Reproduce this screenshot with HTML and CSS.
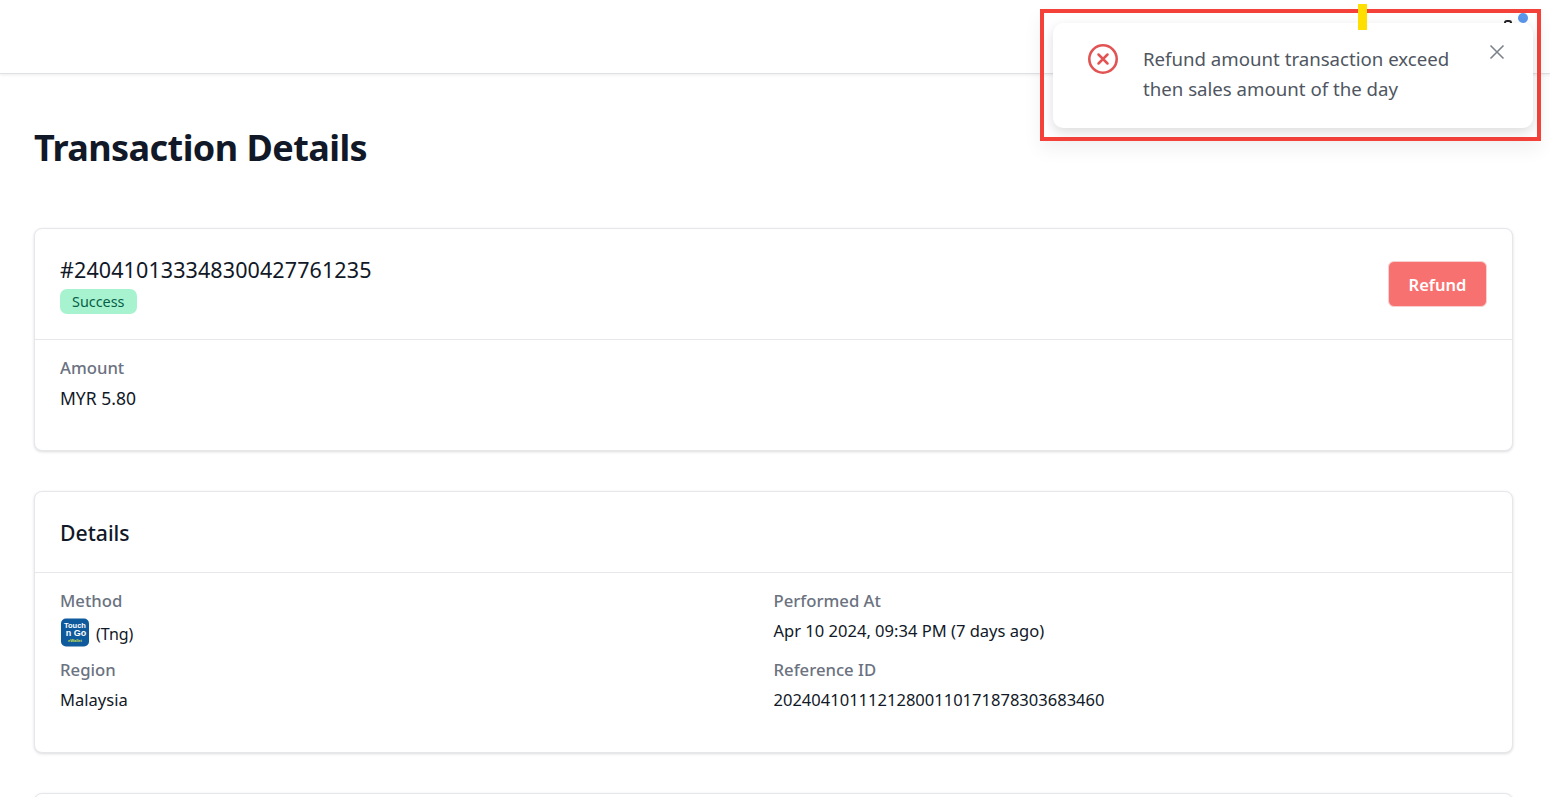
FILE: index.html
```html
<!DOCTYPE html>
<html lang="en">
<head>
<meta charset="utf-8">
<title>Transaction Details</title>
<link rel="stylesheet" href="styles.css">
</head>
<body>
<header class="topbar"></header>
<main class="page">
  <h1 class="page-title">Transaction Details</h1>
  <section class="card">
    <div class="card-head summary-head">
      <div>
        <div class="txn-id">#240410133348300427761235</div>
        <span class="badge">Success</span>
      </div>
      <button class="refund" type="button">Refund</button>
    </div>
    <div class="card-body amount-body">
      <div class="label">Amount</div>
      <div class="value amount">MYR 5.80</div>
    </div>
  </section>
  <section class="card">
    <div class="card-head details-head"><h2 class="card-title">Details</h2></div>
    <div class="card-body details-grid">
      <div class="field">
        <div class="label">Method</div>
        <div class="value method">
          <svg class="tng" viewBox="0 0 28 28" width="28" height="29" aria-hidden="true">
            <rect width="28" height="28" rx="5" fill="#0f5a9c"/>
            <text x="14" y="9.500" text-anchor="middle" class="tng-a">Touch</text>
            <text x="15" y="17" text-anchor="middle" class="tng-b">n Go</text>
            <text x="14" y="23.500" text-anchor="middle" class="tng-c">eWallet</text>
          </svg>
          <span class="method-name">(Tng)</span>
        </div>
      </div>
      <div class="field">
        <div class="label">Performed At</div>
        <div class="value">Apr 10 2024, 09:34 PM (7 days ago)</div>
      </div>
      <div class="field">
        <div class="label">Region</div>
        <div class="value">Malaysia</div>
      </div>
      <div class="field">
        <div class="label">Reference ID</div>
        <div class="value">20240410111212800110171878303683460</div>
      </div>
    </div>
  </section>
  <section class="card"><div class="card-head details-head"></div></section>
</main>
<div class="nav-dot"></div>
<div class="nav-glyph"></div>
<div class="annot"></div>
<div class="toast" role="alert">
  <svg class="toast-icon" viewBox="0 0 32 32" width="32" height="32" aria-hidden="true">
    <circle cx="16" cy="16" r="13.700" fill="none" stroke="#e25454" stroke-width="2.600"/>
    <path d="M11.500 11.500l9 9M20.500 11.500l-9 9" fill="none" stroke="#e25454" stroke-width="2.500" stroke-linecap="round"/>
  </svg>
  <p class="toast-text">Refund amount transaction exceed then sales amount of the day</p>
  <svg class="toast-close" viewBox="0 0 16 16" width="16" height="16" aria-hidden="true">
    <path d="M1.500 1.500l13 13M14.500 1.500l-13 13" fill="none" stroke="#7d838c" stroke-width="1.600"/>
  </svg>
</div>
<div class="hl-mark"></div>
</body>
</html>
```
FILE: styles.css
```css
* { box-sizing: border-box; }
html, body { margin: 0; height: 797px; overflow: hidden; background: #fff; }
body { font-family: "Noto Sans", "Open Sans", sans-serif; color: #111827; position: relative; }
.topbar { height: 74px; background: #fff; border-bottom: 1px solid #dfe1e5; box-shadow: 0 1px 3px rgba(0,0,0,.08); }
.page { height: 723px; overflow: hidden; padding: 49px 37px 0 34px; }
.page-title { margin: 0 0 55px; font-size: 36px; line-height: 50px; font-weight: 700; color: #111827; letter-spacing: -.56px; }
.card { border: 1px solid #e5e7eb; border-radius: 8px; background: #fff; box-shadow: 0 1px 3px rgba(0,0,0,.14); margin-bottom: 40px; }
.card-head { border-bottom: 1px solid #e5e7eb; padding: 0 25px; }
.summary-head { height: 111px; display: flex; justify-content: space-between; align-items: center; }
.details-head { height: 81px; display: flex; align-items: center; }
.txn-id { font-size: 21.500px; line-height: 30px; letter-spacing: .1px; }
.badge { display: inline-block; margin-top: 4px; height: 25px; padding: 0 12px; border-radius: 7px; background: #a7f3d0; color: #065f46; font-size: 14.400px; line-height: 26px; }
.refund { width: 99px; height: 46px; border: 1px solid #f8d0d0; border-radius: 6px; background: #f87171; color: #fff; font: 600 16.500px/1 "Noto Sans", sans-serif; padding: 2px 0 0; }
.card-body { padding: 13px 25px 0; }
.amount-body { height: 110px; }
.label { font-size: 16.700px; line-height: 29px; font-weight: 500; color: #6b7280; }
.value { font-size: 16.550px; line-height: 32px; color: #111827; }
.amount { font-size: 17.500px; }
.card-title { margin: 0; font-size: 21.200px; font-weight: 500; }
.details-grid { display: grid; grid-template-columns: 1fr 1fr; height: 179px; align-content: start; grid-template-rows: 69px 69px; }
.method { display: flex; align-items: center; gap: 7px; height: 34px; padding-left: 1px; }
.method-name { font-size: 16px; margin-top: 4px; }
.tng { display: block; }
.tng-a { font: 700 7.500px "Liberation Sans", sans-serif; fill: #fff; }
.tng-b { font: 700 9px "Liberation Sans", sans-serif; fill: #fff; }
.tng-c { font: 700 4px "Liberation Sans", sans-serif; fill: #d3e04a; }
.hl-mark { position: absolute; left: 1358px; top: 4px; width: 9px; height: 26px; background: #ffdf00; }
.nav-dot { position: absolute; left: 1518px; top: 13px; width: 10px; height: 10px; border-radius: 50%; background: #5b96ea; }
.nav-glyph { position: absolute; left: 1504px; top: 20px; width: 8px; height: 3px; border: 2px solid #222; border-bottom: 0; border-radius: 4px 4px 0 0; }
.annot { position: absolute; left: 1040px; top: 9px; width: 501px; height: 132px; border: 4px solid #f4423a; box-shadow: 0 8px 18px rgba(0,0,0,.06); }
.toast { position: absolute; left: 1053px; top: 23px; width: 480px; height: 105px; background: #fff; border-radius: 10px; box-shadow: 0 4px 12px rgba(0,0,0,.14); display: flex; align-items: flex-start; padding: 20px 28px 0 34px; }
.toast-icon { flex: none; }
.toast-text { margin: 1px 0 0 24px; width: 322px; font-size: 18.650px; line-height: 30px; color: #4f5661; }
.toast-close { flex: none; margin: 1px 0 0 24px; }
```
